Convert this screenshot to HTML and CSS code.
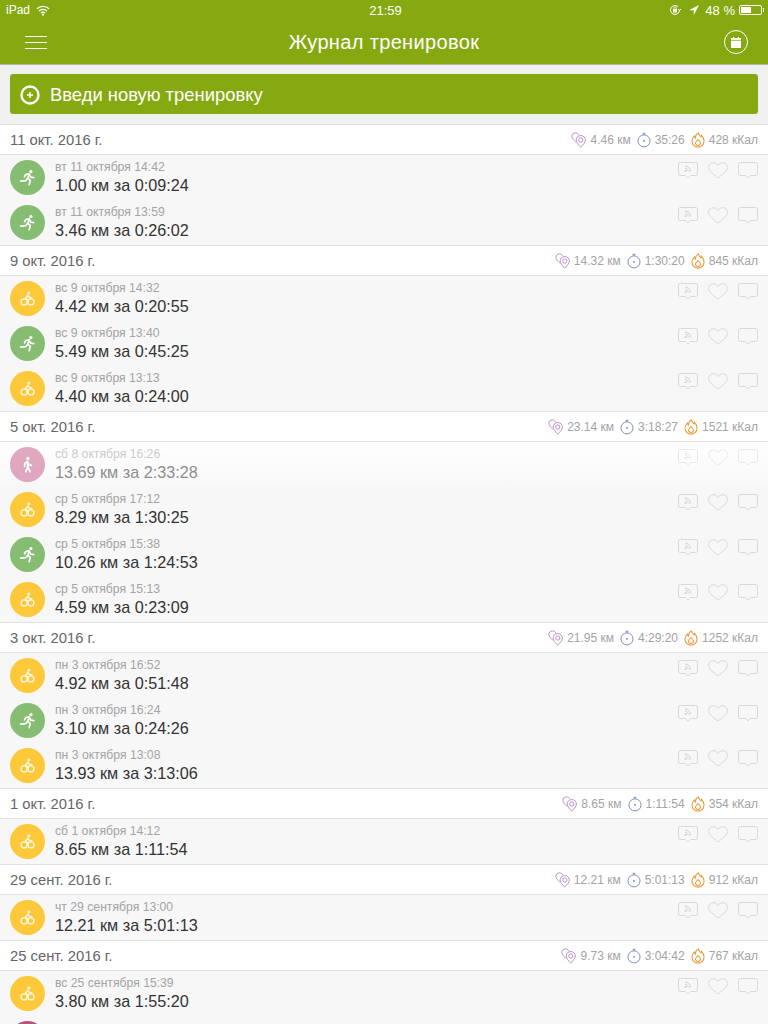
FILE: index.html
```html
<!DOCTYPE html>
<html lang="ru">
<head>
  <meta charset="UTF-8">
  <meta name="viewport" content="width=device-width, initial-scale=1.0">
  <title>Журнал тренировок</title>
  <link rel="stylesheet" href="styles.css">
</head>
<body>
  <svg class="sprite" xmlns="http://www.w3.org/2000/svg">
    <symbol id="i-pin" viewBox="0 0 18 18">
      <g fill="none" stroke="#b583c4" stroke-width="1">
        <path d="M5 1C2.600 1 1 2.800 1 4.800c0 2.200 2.200 4.600 4.400 6.600"/>
        <path d="M5 1c1.600 0 3 .8 3.700 2.200"/>
        <path d="M11 4c-3 0-5.200 2.200-5.200 5 0 3 3 5.600 5.200 8 2.200-2.400 5.200-5 5.200-8 0-2.800-2.200-5-5.200-5z"/>
        <circle cx="11" cy="9" r="2.400"/>
      </g>
    </symbol>
    <symbol id="i-timer" viewBox="0 0 18 18">
      <g fill="none" stroke="#6d7fc0" stroke-width="1">
        <circle cx="9" cy="10" r="6.800"/>
        <path d="M7.500 1.500h3M9 1.500v1.700"/>
      </g>
      <circle cx="9" cy="10" r="1" fill="#6d7fc0"/>
    </symbol>
    <symbol id="i-flame" viewBox="0 0 18 18">
      <g fill="none" stroke="#ee9a3c" stroke-width="1.200">
        <path d="M9.500 1c.5 2.800 2.200 3.400 3 4.500.4-.6.500-1.200.5-1.800 1.700 1.800 2.800 4 2.800 6.300 0 4-3 7-6.800 7s-6.800-3-6.800-6.800c0-2.600 1.500-4.200 2.800-5.700.1 1 .4 1.700 1 2.300C6 4.200 7.400 2.200 9.500 1z"/>
        <path d="M9 8.500c-1.800 1.500-2.800 2.600-2.800 4 0 1.600 1.300 2.700 2.800 2.700s2.800-1.100 2.800-2.700c0-1.400-1-2.500-2.800-4z"/>
      </g>
    </symbol>
    <symbol id="i-feed" viewBox="0 0 20 17">
      <path d="M2.500.5h15a2 2 0 0 1 2 2v9a2 2 0 0 1-2 2h-5L10 16l-2.500-2.500h-5a2 2 0 0 1-2-2v-9a2 2 0 0 1 2-2z" fill="none" stroke="#d9d9d9"/>
      <path d="M7 4c3 0 5.500 2.500 5.500 5.500M7 6.200c1.900 0 3.300 1.400 3.300 3.300" fill="none" stroke="#d0d0d0"/>
      <circle cx="7.600" cy="9" r="1.100" fill="#d0d0d0"/>
    </symbol>
    <symbol id="i-heart" viewBox="0 0 20 17">
      <path d="M10 16C6 12.800.6 9.500.6 5.300.6 2.700 2.600.7 5.200.7c2 0 3.800 1.100 4.800 3 1-1.900 2.800-3 4.800-3 2.600 0 4.600 2 4.600 4.600C19.400 9.500 14 12.800 10 16z" fill="none" stroke="#d9d9d9"/>
    </symbol>
    <symbol id="i-comment" viewBox="0 0 20 17">
      <path d="M2.500.5h15a2 2 0 0 1 2 2v9a2 2 0 0 1-2 2h-5L10 16l-2.500-2.500h-5a2 2 0 0 1-2-2v-9a2 2 0 0 1 2-2z" fill="none" stroke="#d9d9d9"/>
    </symbol>
    <symbol id="i-run" viewBox="0 0 20 20">
      <circle cx="14" cy="3" r="1.900" fill="#fff"/>
      <path d="M12 5.800 8 6.500 6.500 9.200M12 5.800l-1.800 5 3 2.600-1.200 5M10.200 10.800 8 13.600l-6 .6M12.300 6.500l1.500 3 3.500.6" fill="none" stroke="#fff" stroke-width="2" stroke-linecap="round" stroke-linejoin="round"/>
    </symbol>
    <symbol id="i-bike" viewBox="0 0 20 20">
      <circle cx="11.500" cy="3.500" r="1.800" fill="#fff"/>
      <circle cx="6" cy="14" r="3.600" fill="none" stroke="#fff" stroke-width="1.500"/>
      <circle cx="14" cy="14" r="3.600" fill="none" stroke="#fff" stroke-width="1.500"/>
      <path d="M10.500 6.200 7.500 9.800l3.300 2.200v3M10.500 6.200l2 2.800h2.500" fill="none" stroke="#fff" stroke-width="1.800" stroke-linecap="round" stroke-linejoin="round"/>
    </symbol>
    <symbol id="i-walk" viewBox="0 0 20 20">
      <circle cx="10.500" cy="3" r="2" fill="#fff"/>
      <path d="M10 6.500 7 8.500 6.500 12M10 6.500l.4 6-2.400 5.800M10.400 12.500l2.600 5.800M10.200 7.500l1.600 2.500 2.700 1" fill="none" stroke="#fff" stroke-width="2.200" stroke-linecap="round" stroke-linejoin="round"/>
    </symbol>
  </svg>

  <header class="topbar">
    <div class="status">
      <div class="status-left">
        iPad
        <svg class="wifi" viewBox="0 0 14 11"><path d="M1 3.800a8.500 8.500 0 0 1 12 0M3 6a5.600 5.600 0 0 1 8 0M5 8.100a2.800 2.800 0 0 1 4 0" fill="none" stroke="#fff" stroke-width="1.300"/><circle cx="7" cy="9.700" r="1" fill="#fff"/></svg>
      </div>
      <div class="status-time">21:59</div>
      <div class="status-right">
        <svg class="lock" viewBox="0 0 12 12"><path d="M10.500 6A4.500 4.500 0 1 1 9 2.600" fill="none" stroke="#fff"/><path d="m9.500 5 1 1.500L12 5" fill="none" stroke="#fff"/><rect x="4" y="5" width="4" height="3.500" fill="#fff"/><path d="M4.800 5V4a1.200 1.200 0 0 1 2.400 0v1" fill="none" stroke="#fff" stroke-width=".8"/></svg>
        <svg class="arrow" viewBox="0 0 10 10"><path d="M10 0 0 5.200h4.800V10z" fill="#fff"/></svg>
        <span>48 %</span>
        <div class="battery"><div class="battery-level"></div></div>
      </div>
    </div>
    <div class="nav">
      <div class="burger"><span></span><span></span><span></span></div>
      <h1>Журнал тренировок</h1>
      <div class="nav-action">
        <svg viewBox="0 0 10 11"><path d="M0 1h2V0h1v1h4V0h1v1h2v10H0z" fill="#fff"/><path d="M0 3.300h10" stroke="#86a912" stroke-width=".8"/></svg>
      </div>
    </div>
  </header>

  <main>
    <div class="add-wrap">
      <button class="add-btn">
        <svg viewBox="0 0 20 20"><circle cx="10" cy="10" r="8.500" fill="none" stroke="#fff" stroke-width="2.400"/><path d="M10 7v6M7 10h6" stroke="#fff" stroke-width="1.500"/></svg>
        Введи новую тренировку
      </button>
    </div>

    <div class="day">
      <div class="day-date">11 окт. 2016 г.</div>
      <div class="totals">
        <svg class="t-icon"><use href="#i-pin"/></svg><span>4.46 км</span>
        <svg class="t-icon"><use href="#i-timer"/></svg><span>35:26</span>
        <svg class="t-icon"><use href="#i-flame"/></svg><span>428 кКал</span>
      </div>
    </div>
    <div class="row">
      <div class="badge run"><svg><use href="#i-run"/></svg></div>
      <div class="info"><div class="when">вт 11 октября 14:42</div><div class="what">1.00 км за 0:09:24</div></div>
      <div class="actions"><svg><use href="#i-feed"/></svg><svg><use href="#i-heart"/></svg><svg><use href="#i-comment"/></svg></div>
    </div>
    <div class="row">
      <div class="badge run"><svg><use href="#i-run"/></svg></div>
      <div class="info"><div class="when">вт 11 октября 13:59</div><div class="what">3.46 км за 0:26:02</div></div>
      <div class="actions"><svg><use href="#i-feed"/></svg><svg><use href="#i-heart"/></svg><svg><use href="#i-comment"/></svg></div>
    </div>

    <div class="day">
      <div class="day-date">9 окт. 2016 г.</div>
      <div class="totals">
        <svg class="t-icon"><use href="#i-pin"/></svg><span>14.32 км</span>
        <svg class="t-icon"><use href="#i-timer"/></svg><span>1:30:20</span>
        <svg class="t-icon"><use href="#i-flame"/></svg><span>845 кКал</span>
      </div>
    </div>
    <div class="row">
      <div class="badge bike"><svg><use href="#i-bike"/></svg></div>
      <div class="info"><div class="when">вс 9 октября 14:32</div><div class="what">4.42 км за 0:20:55</div></div>
      <div class="actions"><svg><use href="#i-feed"/></svg><svg><use href="#i-heart"/></svg><svg><use href="#i-comment"/></svg></div>
    </div>
    <div class="row">
      <div class="badge run"><svg><use href="#i-run"/></svg></div>
      <div class="info"><div class="when">вс 9 октября 13:40</div><div class="what">5.49 км за 0:45:25</div></div>
      <div class="actions"><svg><use href="#i-feed"/></svg><svg><use href="#i-heart"/></svg><svg><use href="#i-comment"/></svg></div>
    </div>
    <div class="row">
      <div class="badge bike"><svg><use href="#i-bike"/></svg></div>
      <div class="info"><div class="when">вс 9 октября 13:13</div><div class="what">4.40 км за 0:24:00</div></div>
      <div class="actions"><svg><use href="#i-feed"/></svg><svg><use href="#i-heart"/></svg><svg><use href="#i-comment"/></svg></div>
    </div>

    <div class="day">
      <div class="day-date">5 окт. 2016 г.</div>
      <div class="totals">
        <svg class="t-icon"><use href="#i-pin"/></svg><span>23.14 км</span>
        <svg class="t-icon"><use href="#i-timer"/></svg><span>3:18:27</span>
        <svg class="t-icon"><use href="#i-flame"/></svg><span>1521 кКал</span>
      </div>
    </div>
    <div class="row row-faded">
      <div class="badge walk"><svg><use href="#i-walk"/></svg></div>
      <div class="info"><div class="when">сб 8 октября 16:26</div><div class="what">13.69 км за 2:33:28</div></div>
      <div class="actions"><svg><use href="#i-feed"/></svg><svg><use href="#i-heart"/></svg><svg><use href="#i-comment"/></svg></div>
    </div>
    <div class="row">
      <div class="badge bike"><svg><use href="#i-bike"/></svg></div>
      <div class="info"><div class="when">ср 5 октября 17:12</div><div class="what">8.29 км за 1:30:25</div></div>
      <div class="actions"><svg><use href="#i-feed"/></svg><svg><use href="#i-heart"/></svg><svg><use href="#i-comment"/></svg></div>
    </div>
    <div class="row">
      <div class="badge run"><svg><use href="#i-run"/></svg></div>
      <div class="info"><div class="when">ср 5 октября 15:38</div><div class="what">10.26 км за 1:24:53</div></div>
      <div class="actions"><svg><use href="#i-feed"/></svg><svg><use href="#i-heart"/></svg><svg><use href="#i-comment"/></svg></div>
    </div>
    <div class="row">
      <div class="badge bike"><svg><use href="#i-bike"/></svg></div>
      <div class="info"><div class="when">ср 5 октября 15:13</div><div class="what">4.59 км за 0:23:09</div></div>
      <div class="actions"><svg><use href="#i-feed"/></svg><svg><use href="#i-heart"/></svg><svg><use href="#i-comment"/></svg></div>
    </div>

    <div class="day">
      <div class="day-date">3 окт. 2016 г.</div>
      <div class="totals">
        <svg class="t-icon"><use href="#i-pin"/></svg><span>21.95 км</span>
        <svg class="t-icon"><use href="#i-timer"/></svg><span>4:29:20</span>
        <svg class="t-icon"><use href="#i-flame"/></svg><span>1252 кКал</span>
      </div>
    </div>
    <div class="row">
      <div class="badge bike"><svg><use href="#i-bike"/></svg></div>
      <div class="info"><div class="when">пн 3 октября 16:52</div><div class="what">4.92 км за 0:51:48</div></div>
      <div class="actions"><svg><use href="#i-feed"/></svg><svg><use href="#i-heart"/></svg><svg><use href="#i-comment"/></svg></div>
    </div>
    <div class="row">
      <div class="badge run"><svg><use href="#i-run"/></svg></div>
      <div class="info"><div class="when">пн 3 октября 16:24</div><div class="what">3.10 км за 0:24:26</div></div>
      <div class="actions"><svg><use href="#i-feed"/></svg><svg><use href="#i-heart"/></svg><svg><use href="#i-comment"/></svg></div>
    </div>
    <div class="row">
      <div class="badge bike"><svg><use href="#i-bike"/></svg></div>
      <div class="info"><div class="when">пн 3 октября 13:08</div><div class="what">13.93 км за 3:13:06</div></div>
      <div class="actions"><svg><use href="#i-feed"/></svg><svg><use href="#i-heart"/></svg><svg><use href="#i-comment"/></svg></div>
    </div>

    <div class="day">
      <div class="day-date">1 окт. 2016 г.</div>
      <div class="totals">
        <svg class="t-icon"><use href="#i-pin"/></svg><span>8.65 км</span>
        <svg class="t-icon"><use href="#i-timer"/></svg><span>1:11:54</span>
        <svg class="t-icon"><use href="#i-flame"/></svg><span>354 кКал</span>
      </div>
    </div>
    <div class="row">
      <div class="badge bike"><svg><use href="#i-bike"/></svg></div>
      <div class="info"><div class="when">сб 1 октября 14:12</div><div class="what">8.65 км за 1:11:54</div></div>
      <div class="actions"><svg><use href="#i-feed"/></svg><svg><use href="#i-heart"/></svg><svg><use href="#i-comment"/></svg></div>
    </div>

    <div class="day">
      <div class="day-date">29 сент. 2016 г.</div>
      <div class="totals">
        <svg class="t-icon"><use href="#i-pin"/></svg><span>12.21 км</span>
        <svg class="t-icon"><use href="#i-timer"/></svg><span>5:01:13</span>
        <svg class="t-icon"><use href="#i-flame"/></svg><span>912 кКал</span>
      </div>
    </div>
    <div class="row">
      <div class="badge bike"><svg><use href="#i-bike"/></svg></div>
      <div class="info"><div class="when">чт 29 сентября 13:00</div><div class="what">12.21 км за 5:01:13</div></div>
      <div class="actions"><svg><use href="#i-feed"/></svg><svg><use href="#i-heart"/></svg><svg><use href="#i-comment"/></svg></div>
    </div>

    <div class="day">
      <div class="day-date">25 сент. 2016 г.</div>
      <div class="totals">
        <svg class="t-icon"><use href="#i-pin"/></svg><span>9.73 км</span>
        <svg class="t-icon"><use href="#i-timer"/></svg><span>3:04:42</span>
        <svg class="t-icon"><use href="#i-flame"/></svg><span>767 кКал</span>
      </div>
    </div>
    <div class="row">
      <div class="badge bike"><svg><use href="#i-bike"/></svg></div>
      <div class="info"><div class="when">вс 25 сентября 15:39</div><div class="what">3.80 км за 1:55:20</div></div>
      <div class="actions"><svg><use href="#i-feed"/></svg><svg><use href="#i-heart"/></svg><svg><use href="#i-comment"/></svg></div>
    </div>
    <div class="row">
      <div class="badge hike"></div>
    </div>
  </main>
</body>
</html>
```

FILE: styles.css
```css
:root {
  --green: #86a912;
  --page: #f0f0f0;
  --row: #f7f7f7;
  --line: #e2e2e2;
  --muted: #a3a3a3;
}
* { box-sizing: border-box; }
html, body {
  height: 1024px;
  overflow: hidden;
}
body {
  margin: 0;
  font-family: "Liberation Sans", Arial, sans-serif;
  background: var(--row);
  color: #333;
}
.sprite {
  display: none;
}

/* top bar */
.topbar {
  height: 65px;
  background: var(--green);
  border-bottom: 1px solid #b4b9a6;
  color: #fff;
}
.status {
  height: 20px;
  padding: 0 6px;
  display: grid;
  grid-template-columns: 1fr auto 1fr;
  align-items: center;
  font-size: 12px;
}
.status-left {
  display: flex;
  align-items: center;
  gap: 6px;
}
.wifi {
  width: 14px;
  height: 11px;
}
.status-time {
  margin-left: 3px;
  font-size: 13px;
}
.status-right {
  display: flex;
  justify-content: flex-end;
  align-items: center;
  font-size: 13px;
}
.lock {
  width: 12px;
  height: 12px;
  margin-right: 8px;
}
.arrow {
  width: 10px;
  height: 10px;
  margin-right: 6px;
}
.battery {
  position: relative;
  width: 23px;
  height: 10px;
  margin-left: 4px;
  padding: 1px;
  border: 1px solid #fff;
  border-radius: 2px;
}
.battery-level {
  width: 10px;
  height: 100%;
  background: #fff;
}
.battery::after {
  content: "";
  position: absolute;
  right: -3px;
  top: 2px;
  width: 1px;
  height: 4px;
  background: #fff;
}
.nav {
  height: 44px;
  padding: 0 20px;
  display: grid;
  grid-template-columns: 1fr auto 1fr;
  align-items: center;
}
.nav h1 {
  margin: 0;
  font-size: 20px;
  font-weight: normal;
  letter-spacing: 0.35px;
}
.burger {
  width: 22px;
  margin-left: 5px;
  display: flex;
  flex-direction: column;
  gap: 5px;
}
.burger span {
  height: 1px;
  background: #fff;
}
.nav-action {
  justify-self: end;
  width: 24px;
  height: 24px;
  border: 1px solid #fff;
  border-radius: 50%;
  display: flex;
  justify-content: center;
  align-items: center;
}
.nav-action svg {
  width: 10px;
  height: 11px;
}

/* new workout button */
.add-wrap {
  background: var(--page);
  padding: 9px 10px 10px;
}
.add-btn {
  width: 100%;
  height: 40px;
  padding: 1px 10px 0;
  display: flex;
  align-items: center;
  gap: 10px;
  background: var(--green);
  color: #fff;
  border: none;
  border-radius: 3px;
  font-family: inherit;
  font-size: 18.4px;
}
.add-btn svg {
  width: 20px;
  height: 20px;
}

/* day header */
.day {
  height: 31px;
  padding: 0 10px;
  display: flex;
  justify-content: space-between;
  align-items: center;
  background: #fff;
  border-top: 1px solid var(--line);
  border-bottom: 1px solid var(--line);
}
.day-date {
  font-size: 14.8px;
  color: #666;
}
.totals {
  display: flex;
  align-items: center;
  font-size: 12px;
  color: var(--muted);
}
.totals span {
  margin-left: 3px;
}
.t-icon {
  width: 16px;
  height: 16px;
  margin-left: 5px;
}

/* workout row */
.row {
  height: 45px;
  padding: 5px 10px;
  display: flex;
  background: var(--row);
}
.row-faded {
  background: linear-gradient(#fff, var(--row));
}
.row-faded > * {
  opacity: 0.55;
}
.badge {
  flex: none;
  width: 35px;
  height: 35px;
  border-radius: 50%;
  display: flex;
  justify-content: center;
  align-items: center;
}
.badge svg {
  width: 17px;
  height: 17px;
}
.bike svg {
  opacity: 0.85;
}
.run { background: #87bd73; }
.bike { background: #fdc93b; }
.walk { background: #c9658f; }
.hike { background: #b5577f; }
.info {
  flex: 1;
  margin-left: 10px;
}
.when {
  margin-top: 1px;
  font-size: 12.2px;
  line-height: 13px;
  color: var(--muted);
}
.what {
  margin-top: 2px;
  font-size: 16.2px;
  line-height: 18px;
}
.actions {
  display: flex;
  gap: 10px;
  padding-top: 2px;
}
.actions svg {
  width: 20px;
  height: 17px;
}
```
